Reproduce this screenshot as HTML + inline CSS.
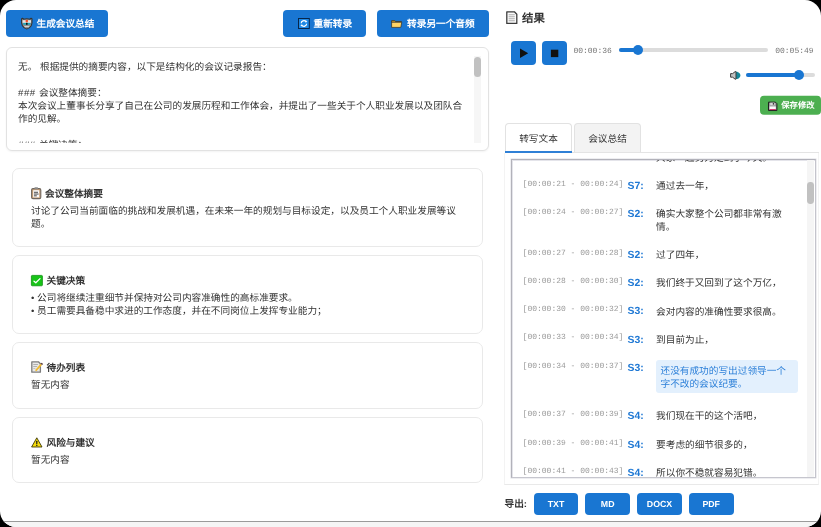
<!DOCTYPE html>
<html lang="zh-CN">
<head>
<meta charset="utf-8">
<title>会议转录</title>
<style>
*{box-sizing:border-box;margin:0;padding:0}
html,body{width:821px;height:527px;overflow:hidden;background:#000}
body{font-family:"Liberation Sans",sans-serif;font-size:9.66px;color:#333;line-height:13px;text-rendering:geometricPrecision}
#win{position:absolute;left:0;top:0;width:821px;height:527px;background:#fff;border-radius:16px;overflow:hidden;filter:blur(0.35px)}
.abs{position:absolute}
svg{overflow:visible;display:block}
.btn{position:absolute;background:#1976d2;border-radius:4px;color:#fff;font-weight:bold;white-space:nowrap}
.btn span{position:absolute;top:1.2px;line-height:27px;font-size:9.66px}
.btn svg{position:absolute}
#statusbar{position:absolute;left:0;top:521px;width:821px;height:6px;background:#f5f5f5;border-top:1px solid #9a9a9a}
/* textarea box */
#tabox{position:absolute;left:6px;top:47px;width:483px;height:104px;border:1px solid #e2e2e2;border-radius:6px;background:#fff;box-shadow:0 1px 2px rgba(0,0,0,.05)}
#tatext{position:absolute;left:11px;top:13px;width:452px;height:82px;overflow:hidden;line-height:13px;font-size:9.66px;color:#333;white-space:nowrap}
#tatrack{position:absolute;left:466.5px;top:8px;width:7px;height:87px;background:#f6f6f6}
#tathumb{position:absolute;left:466.5px;top:9px;width:7px;height:20px;border-radius:3.5px;background:#c1c1c1}
/* cards */
.card{position:absolute;left:12px;width:471px;border:1px solid #e9e9e9;border-radius:7px;background:#fff}
.card h3{position:absolute;left:32px;font-size:9.66px;font-weight:bold;color:#333;line-height:13px;white-space:nowrap}
.card p{position:absolute;left:18px;font-size:9.66px;color:#333;line-height:12.8px;white-space:nowrap}
.card svg{position:absolute;left:18px}

/* right column */
#rtitle{position:absolute;left:522px;top:10.5px;font-size:11.4px;font-weight:bold;color:#333;line-height:16px;white-space:nowrap}
.pbtn{position:absolute;top:40.8px;width:25px;height:24.5px;background:#1976d2;border-radius:4px}
.mono{font-family:"Liberation Mono",monospace;font-size:8px;white-space:nowrap}
.time{position:absolute;color:#777;line-height:10px}
.track{position:absolute;height:4px;border-radius:2px;background:#dcdcdc}
.fill{position:absolute;height:4px;border-radius:2px;background:#1976d2}
.knob{position:absolute;width:10px;height:10px;border-radius:5px;background:#1976d2}
#save{position:absolute;left:760px;top:95px;transform:translateY(0.65px);width:61px;height:19.3px;background:#4caf50;border-radius:4px;color:#fff;font-weight:bold}
#save span{position:absolute;left:21.3px;top:0.4px;line-height:19.4px;font-size:8.3px;white-space:nowrap}
.tab{position:absolute;top:123px;height:29px;border:1px solid #e2e2e2;border-bottom:none;border-radius:4px 4px 0 0;text-align:center;line-height:31px;font-size:9.66px;color:#333;white-space:nowrap}
#tabline{position:absolute;left:505px;top:152px;width:314px;height:1px;background:#e4e4e4}
#tabactive{position:absolute;left:505px;top:150.8px;width:66.8px;height:2px;background:#2f80d6}
#panel{position:absolute;left:504px;top:153px;width:315px;height:332px;border:1px solid #f3f3f3;border-bottom-color:#e9e9e9;border-top:none}
#tbox{position:absolute;left:511.2px;top:159.3px;width:304.6px;height:318.7px;border:1.5px solid;border-color:#b2b2ba #c4c4cc #c6c6ce #b2b2ba;background:#fff;overflow:hidden;box-shadow:inset 1px 1px 0 #e4e4ea,0 0 0 .5px #dedee4}
.row{position:absolute;left:0;width:100%;margin-top:2px}
.ts{position:absolute;left:10.4px;color:#9a9a9a;line-height:10px}
.sp{position:absolute;left:115.3px;font-weight:bold;color:#1f78d4;font-size:10.4px;line-height:12px;white-space:nowrap}
.tx{position:absolute;left:143.9px;color:#333;font-size:9.66px;line-height:12.7px;white-space:nowrap}
#hl{position:absolute;left:143.4px;width:142px;height:33px;background:#e3f0fd;border-radius:3px}
#tbtrack{position:absolute;left:294.7px;top:0;width:7px;height:100%;background:#f5f5f5}
#tbthumb{position:absolute;left:294.9px;top:21.5px;width:6.8px;height:22.4px;border-radius:3.4px;background:#c1c1c1}
#explabel{position:absolute;left:504.5px;top:497.5px;font-weight:bold;font-size:9.66px;line-height:13px;color:#333;white-space:nowrap}
.ebtn{position:absolute;top:493px;width:44.8px;height:22px;background:#1976d2;border-radius:4px;color:#fff;font-weight:bold;font-size:8.8px;line-height:22px;text-align:center}
</style>
</head>
<body>
<div id="win">

<!-- top buttons -->
<div class="btn" style="left:6px;top:9.7px;width:102.2px;height:27px"><svg class="abs" style="left:15px;top:8.2px" width="11.6" height="11.2" viewBox="0 0 116 112"><path d="M6 8 Q14 -2 26 12 Q58 4 90 12 Q102 -2 110 8 Q114 52 102 78 Q84 108 58 110 Q32 108 14 78 Q2 52 6 8z" fill="#8f8f8f" stroke="#333" stroke-width="11" stroke-linejoin="round"/><rect x="16" y="22" width="84" height="26" fill="#e4e4e4"/><circle cx="58" cy="30" r="13" fill="#f4502a"/><rect x="22" y="50" width="72" height="17" fill="#1fa9bd"/><rect x="50" y="48" width="16" height="20" fill="#111"/><rect x="34" y="80" width="48" height="9" fill="#dcdcdc"/></svg><span style="left:30.5px">生成会议总结</span></div>
<div class="btn" style="left:283px;top:9.7px;width:83px;height:27px"><svg class="abs" style="left:14.6px;top:8.3px" width="11.8" height="11" viewBox="0 0 118 110"><rect x="5" y="5" width="108" height="100" fill="#1e88e5" stroke="#08264a" stroke-width="10"/><path d="M32 52 A27 24 0 0 1 80 36" fill="none" stroke="#fff" stroke-width="11"/><path d="M86 58 A27 24 0 0 1 38 74" fill="none" stroke="#fff" stroke-width="11"/><path d="M70 24 L94 30 L78 50z" fill="#fff"/><path d="M48 86 L24 80 L40 60z" fill="#fff"/></svg><span style="left:30.5px">重新转录</span></div>
<div class="btn" style="left:376.6px;top:9.7px;width:112.2px;height:27px"><svg class="abs" style="left:14.8px;top:10.2px" width="11.4" height="8" viewBox="0 0 114 80"><path d="M6 6 L38 6 L46 16 L104 16 L104 24 L6 24z" fill="#e9a81f" stroke="#2a2a2a" stroke-width="7" stroke-linejoin="round"/><path d="M6 22 L108 22 L98 74 L6 74z" fill="#ffd466" stroke="#2a2a2a" stroke-width="7" stroke-linejoin="round"/></svg><span style="left:30.5px">转录另一个音频</span></div>

<!-- summary text box -->
<div id="tabox">
<div id="tatext">无。 根据提供的摘要内容，以下是结构化的会议记录报告：<br><br><span style="letter-spacing:.55px">### </span>会议整体摘要：<br>本次会议上董事长分享了自己在公司的发展历程和工作体会，并提出了一些关于个人职业发展以及团队合<br>作的见解。<br><br><span style="letter-spacing:.55px">### </span>关键决策：</div>
<div id="tatrack"></div><div id="tathumb"></div>
</div>

<!-- cards -->
<div class="card" style="top:168px;height:79px"><svg style="top:18px" width="10.4" height="12.2" viewBox="0 0 104 122"><rect x="6" y="16" width="92" height="100" rx="14" fill="#c9a27a" stroke="#6f665e" stroke-width="11"/><rect x="22" y="32" width="60" height="72" fill="#fafafa"/><rect x="34" y="2" width="36" height="20" rx="6" fill="#8a8a8a"/><rect x="30" y="48" width="40" height="9" fill="#333"/><rect x="30" y="66" width="46" height="9" fill="#333"/><rect x="30" y="84" width="28" height="9" fill="#333"/></svg><h3 style="top:19px">会议整体摘要</h3><p style="top:37px">讨论了公司当前面临的挑战和发展机遇，在未来一年的规划与目标设定，以及员工个人职业发展等议<br>题。</p></div>
<div class="card" style="top:255px;height:79px"><svg style="top:19.3px;left:18.3px" width="11.8" height="11.2" viewBox="0 0 118 112"><rect x="4" y="4" width="110" height="104" rx="8" fill="#18c418" stroke="#0f8f12" stroke-width="8"/><path d="M30 62 L48 78 L90 36" fill="none" stroke="#fff" stroke-width="13" stroke-linecap="round" stroke-linejoin="round"/></svg><h3 style="top:19px;left:33.5px">关键决策</h3><p style="top:37px">• 公司将继续注重细节并保持对公司内容准确性的高标准要求。<br>• 员工需要具备稳中求进的工作态度，并在不同岗位上发挥专业能力；</p></div>
<div class="card" style="top:342px;height:67px"><svg style="top:17.6px;left:17.9px" width="12.4" height="12.2" viewBox="0 0 124 122"><path d="M8 8 L74 8 L94 28 L94 112 L8 112z" fill="#e8e8e8" stroke="#7d7d7d" stroke-width="13" stroke-linejoin="round"/><rect x="22" y="30" width="48" height="7" fill="#9a9a9a"/><rect x="22" y="50" width="40" height="7" fill="#9a9a9a"/><rect x="22" y="70" width="22" height="7" fill="#b5b5b5"/><path d="M40 92 L96 28 L110 40 L54 102z" fill="#f2bb2e"/><path d="M96 28 L106 18 L122 30 L110 40z" fill="#5a3a36"/></svg><h3 style="top:19px;left:33.5px">待办列表</h3><p style="top:37px">暂无内容</p></div>
<div class="card" style="top:417px;height:66px"><svg style="top:19.3px;left:18.4px" width="11.6" height="10.8" viewBox="0 0 116 108"><path d="M58 8 L110 100 L6 100z" fill="#f6dc0a" stroke="#3a3608" stroke-width="9" stroke-linejoin="round"/><rect x="52" y="38" width="12" height="34" rx="5" fill="#1a1a1a"/><circle cx="58" cy="84" r="7" fill="#1a1a1a"/></svg><h3 style="top:19px;left:33.5px">风险与建议</h3><p style="top:37px">暂无内容</p></div>


<!-- right column -->
<svg class="abs" style="left:505.6px;top:10.6px" width="11.6" height="13.2" viewBox="0 0 116 132"><path d="M8 8 L84 8 L108 32 L108 124 L8 124z" fill="#fbfbfb" stroke="#3c3c3c" stroke-width="13" stroke-linejoin="round"/><rect x="26" y="34" width="62" height="8" fill="#9a9a9a"/><rect x="26" y="54" width="62" height="8" fill="#9a9a9a"/><rect x="26" y="74" width="62" height="8" fill="#9a9a9a"/><rect x="26" y="94" width="62" height="8" fill="#9a9a9a"/></svg>
<div id="rtitle">结果</div>
<div class="pbtn" style="left:511px"><svg class="abs" style="left:0;top:0" width="25" height="24.5" viewBox="0 0 25 24.5"><path d="M9 7.4L17.2 12.2L9 17z" fill="#111"/></svg></div>
<div class="pbtn" style="left:541.8px"><svg class="abs" style="left:0;top:0" width="25" height="24.5" viewBox="0 0 25 24.5"><rect x="8.9" y="8.7" width="7.4" height="7.4" fill="#111"/></svg></div>
<div class="time mono" style="left:573.4px;top:46.8px">00:00:36</div>
<div class="track" style="left:619px;top:48.4px;width:148.5px"></div>
<div class="fill" style="left:619px;top:48.4px;width:20px"></div>
<div class="knob" style="left:633.3px;top:45.4px"></div>
<div class="time mono" style="left:775.2px;top:46.8px">00:05:49</div>
<div class="track" style="left:746.4px;top:72.6px;width:68.4px"></div>
<div class="fill" style="left:746.4px;top:72.6px;width:53px"></div>
<div class="knob" style="left:794px;top:69.6px"></div>
<svg class="abs" style="left:730px;top:70.8px" width="10.4" height="8.8" viewBox="0 0 104 88"><path d="M56 8 L72 8 Q104 20 104 44 Q104 68 72 80 L56 80z" fill="#17889a"/><path d="M6 26 L26 26 L52 6 L60 6 L60 82 L52 82 L26 62 L6 62z" fill="#c4c4c4" stroke="#3c3c3c" stroke-width="10" stroke-linejoin="round"/></svg>
<div id="save"><svg class="abs" style="left:8px;top:5.6px" width="9.4" height="9.4" viewBox="0 0 94 94"><path d="M5 5 L74 5 L89 20 L89 89 L5 89z" fill="#9a9a9a" stroke="#1f1f1f" stroke-width="10" stroke-linejoin="round"/><rect x="22" y="10" width="44" height="26" fill="#d8d8d8"/><rect x="48" y="14" width="12" height="16" fill="#333"/><rect x="16" y="48" width="62" height="26" fill="#fafafa"/><rect x="16" y="74" width="62" height="10" fill="#d8336f"/></svg><span>保存修改</span></div>

<div class="tab" style="left:505px;width:67px;background:#fff">转写文本</div>
<div class="tab" style="left:574px;width:67px;background:#f3f3f3">会议总结</div>
<div id="tabline"></div><div id="tabactive"></div>
<div id="panel"></div>
<div id="tbox">
<div id="tbtrack"></div><div id="tbthumb"></div>
<div class="row" style="top:-9.4px"><div class="tx" style="top:0">大家一起努力走到了今天。</div></div>
<div class="row" style="top:17.5px"><div class="ts mono">[00:00:21 - 00:00:24]</div><div class="sp" style="top:1.2px">S7:</div><div class="tx" style="top:1.5px">通过去一年，</div></div>
<div class="row" style="top:45.7px"><div class="ts mono">[00:00:24 - 00:00:27]</div><div class="sp" style="top:1.2px">S2:</div><div class="tx" style="top:1.5px">确实大家整个公司都非常有激<br>情。</div></div>
<div class="row" style="top:86.7px"><div class="ts mono">[00:00:27 - 00:00:28]</div><div class="sp" style="top:1.2px">S2:</div><div class="tx" style="top:1.5px">过了四年，</div></div>
<div class="row" style="top:114.7px"><div class="ts mono">[00:00:28 - 00:00:30]</div><div class="sp" style="top:1.2px">S2:</div><div class="tx" style="top:1.5px">我们终于又回到了这个万亿，</div></div>
<div class="row" style="top:142.8px"><div class="ts mono">[00:00:30 - 00:00:32]</div><div class="sp" style="top:1.2px">S3:</div><div class="tx" style="top:1.5px">会对内容的准确性要求很高。</div></div>
<div class="row" style="top:171.2px"><div class="ts mono">[00:00:33 - 00:00:34]</div><div class="sp" style="top:1.2px">S3:</div><div class="tx" style="top:1.5px">到目前为止，</div></div>
<div class="row" style="top:199.6px"><div class="ts mono">[00:00:34 - 00:00:37]</div><div class="sp" style="top:1.2px">S3:</div><div id="hl" style="top:-2.4px"></div><div class="tx" style="top:4.6px;left:148.3px;color:#2b7fd8">还没有成功的写出过领导一个<br>字不改的会议纪要。</div></div>
<div class="row" style="top:247.7px"><div class="ts mono">[00:00:37 - 00:00:39]</div><div class="sp" style="top:1.2px">S4:</div><div class="tx" style="top:1.5px">我们现在干的这个活吧，</div></div>
<div class="row" style="top:276.4px"><div class="ts mono">[00:00:39 - 00:00:41]</div><div class="sp" style="top:1.2px">S4:</div><div class="tx" style="top:1.5px">要考虑的细节很多的，</div></div>
<div class="row" style="top:304.4px"><div class="ts mono">[00:00:41 - 00:00:43]</div><div class="sp" style="top:1.2px">S4:</div><div class="tx" style="top:1.5px">所以你不稳就容易犯错。</div></div>
</div>

<div id="explabel">导出:</div>
<div class="ebtn" style="left:533.6px">TXT</div>
<div class="ebtn" style="left:585.3px">MD</div>
<div class="ebtn" style="left:637.1px">DOCX</div>
<div class="ebtn" style="left:688.8px">PDF</div>

<div id="statusbar"></div>
</div>
</body>
</html>
